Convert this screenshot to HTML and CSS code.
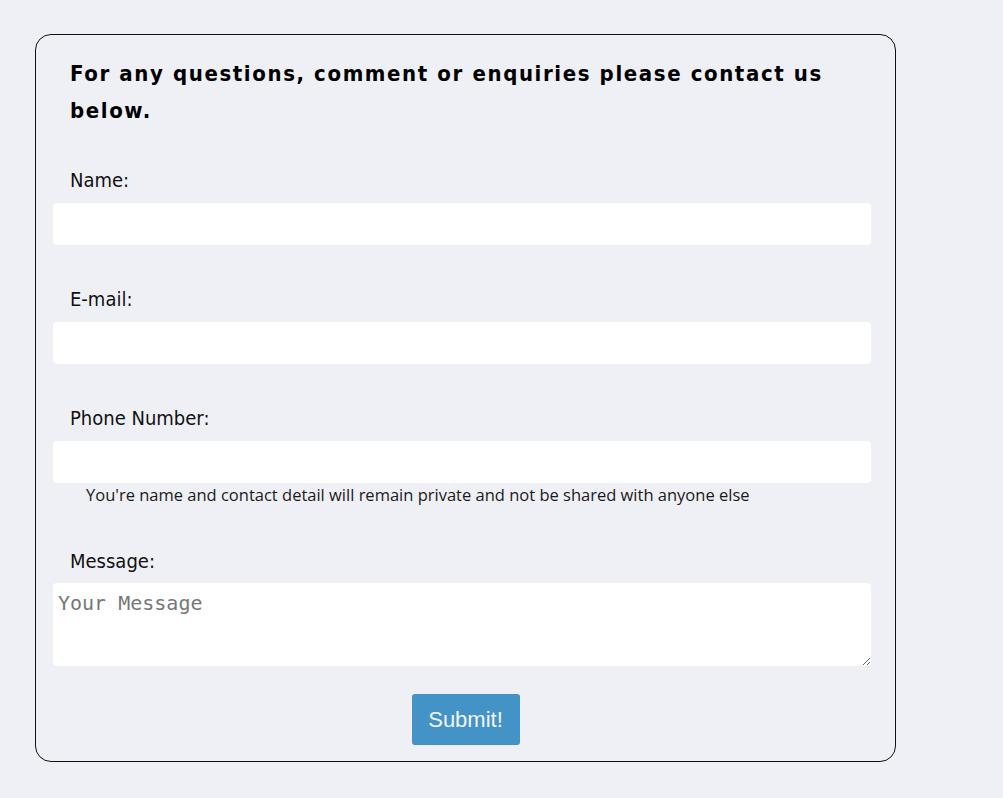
FILE: index.html
```html
<!DOCTYPE html>
<html lang="en">
<head>
<meta charset="utf-8">
<title>Contact</title>
<link rel="stylesheet" href="styles.css">
</head>
<body>
<form class="card">
  <h2 class="title">For any questions, comment or enquiries please contact us below.</h2>
  <label class="label label-first" for="name">Name:</label>
  <input class="field" id="name" type="text">
  <label class="label" for="email">E-mail:</label>
  <input class="field" id="email" type="email">
  <label class="label" for="phone">Phone Number:</label>
  <input class="field" id="phone" type="tel">
  <p class="hint">You're name and contact detail will remain private and not be shared with anyone else</p>
  <label class="label label-msg" for="msg">Message:</label>
  <textarea class="field area" id="msg" placeholder="Your Message"></textarea>
  <div class="actions"><button class="submit" type="button">Submit!</button></div>
</form>
</body>
</html>
```
FILE: styles.css
```css
html, body {
  margin: 0;
  padding: 0;
  background: #eff0f5;
}
body {
  padding: 34px 0 0 35px;
  height: 798px;
  box-sizing: border-box;
}
.card {
  width: 859px;
  border: 1px solid #111;
  border-radius: 16px;
  padding: 20px 0 16px 0;
  display: flex;
  flex-direction: column;
  box-sizing: content-box;
}
.title {
  margin: 0;
  padding: 0 30px 0 34px;
  font-family: "DejaVu Sans", sans-serif;
  font-stretch: condensed;
  font-weight: bold;
  font-size: 22px;
  line-height: 37px;
  letter-spacing: 1.6px;
  color: #000;
}
.label {
  display: block;
  padding-left: 34px;
  margin-top: 39px;
  font-family: "DejaVu Sans", sans-serif;
  font-stretch: condensed;
  font-size: 20px;
  line-height: 30px;
  color: #111;
}
.label-first { margin-top: 36px; }
.label-msg { margin-top: 40px; }
.field {
  display: block;
  margin: 8px 0 0 17px;
  width: 818px;
  height: 42px;
  border: none;
  border-radius: 4px;
  background: #fff;
  box-sizing: border-box;
  padding: 0 6px;
  font-size: 16px;
  outline: none;
}
.area {
  height: 83px;
  margin-top: 7px;
  padding: 8px 5px;
  font-family: "DejaVu Sans Mono", "Liberation Mono", monospace;
  font-size: 20px;
  line-height: 24px;
  resize: vertical;
}
.area::placeholder { color: #777; }
.hint {
  margin: 1px 0 0 0;
  padding-left: 50px;
  font-family: "Open Sans", sans-serif;
  font-size: 16.5px;
  line-height: 22px;
  color: #1a1a1a;
}
.actions {
  display: flex;
  justify-content: center;
  margin-top: 28px;
}
.submit {
  width: 108px;
  height: 51px;
  border: none;
  border-radius: 3px;
  background: #4393c7;
  color: #f2f4fa;
  font-family: "Liberation Sans", Arial, sans-serif;
  font-size: 22px;
  padding: 0;
}
```
